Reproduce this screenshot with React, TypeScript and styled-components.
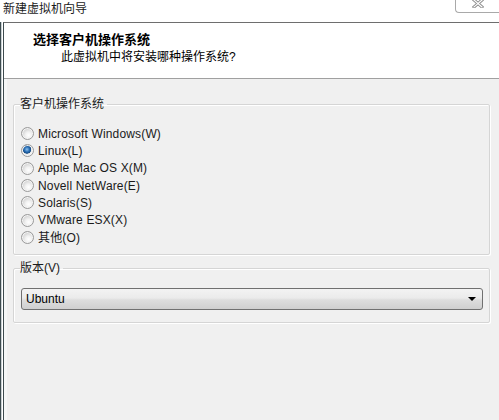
import React from "react";
import styled, { createGlobalStyle } from "styled-components";

const GlobalStyle = createGlobalStyle`
  html, body {
    margin: 0;
    padding: 0;
    background: #ffffff;
  }

  body {
    font-family: "Liberation Sans", "Noto Sans CJK SC", sans-serif;
    font-size: 12px;
    color: #000000;
  }
`;

const osOptions = [
  "Microsoft Windows(W)",
  "Linux(L)",
  "Apple Mac OS X(M)",
  "Novell NetWare(E)",
  "Solaris(S)",
  "VMware ESX(X)",
  "其他(O)",
];

const App = () => {
  // --- RENDER ---

  return (
    <>
      <GlobalStyle />
      <Window>
        <TitleBar>
          <Caption>新建虚拟机向导</Caption>
          <CloseButton>
            <svg width="12" height="9" viewBox="0 0 12 9">
              <path
                d="M2 1 L10 8 M10 1 L2 8"
                stroke="#8a8a8a"
                strokeWidth="3"
                strokeLinecap="square"
              />
              <path
                d="M2 1 L10 8 M10 1 L2 8"
                stroke="#ffffff"
                strokeWidth="1.2"
                strokeLinecap="square"
              />
            </svg>
          </CloseButton>
        </TitleBar>

        <Frame>
          <FrameEdge />
          <Client>
            <Header>
              <HeaderTitle>选择客户机操作系统</HeaderTitle>
              <HeaderSubtitle>此虚拟机中将安装哪种操作系统?</HeaderSubtitle>
            </Header>

            <Body>
              <GroupBox>
                <Legend>客户机操作系统</Legend>
                <RadioList>
                  {osOptions.map((label) => (
                    <RadioRow key={label}>
                      <Radio $checked={label === "Linux(L)"} />
                      <RadioLabel>{label}</RadioLabel>
                    </RadioRow>
                  ))}
                </RadioList>
              </GroupBox>

              <GroupBox $compact>
                <Legend>版本(V)</Legend>
                <Combo>
                  <ComboText>Ubuntu</ComboText>
                  <ComboArrow />
                </Combo>
              </GroupBox>
            </Body>
          </Client>
        </Frame>
      </Window>
    </>
  );
};

export default App;

const Window = styled.div`
  width: 499px;
  height: 420px;
  display: flex;
  flex-direction: column;
  overflow: hidden;
  background: #ffffff;
`;

const TitleBar = styled.div`
  height: 22px;
  display: flex;
  justify-content: space-between;
  align-items: flex-start;
  flex-shrink: 0;
`;

const Caption = styled.div`
  padding: 2px 0 0 3px;
  font-size: 12px;
  line-height: 15px;
  color: #1a1a1a;
`;

const CloseButton = styled.div`
  width: 43px;
  height: 12px;
  display: flex;
  align-items: flex-start;
  justify-content: center;
  border: 1px solid #a9a9a9;
  border-top: none;
  border-right: none;
  border-bottom-left-radius: 4px;
  background: #ffffff;

  svg {
    margin-top: -1px;
  }
`;

const Frame = styled.div`
  flex: 1;
  display: flex;
`;

const FrameEdge = styled.div`
  width: 1px;
  margin-right: 1px;
  border-left: 1px solid #3d4b4f;
  background: #c9d2d4;
`;

const Client = styled.div`
  flex: 1;
  display: flex;
  flex-direction: column;
  border-left: 1px solid #3d4b4f;
  border-top: 1px solid #6e6e6e;
  background: #f0f0f0;
`;

const Header = styled.div`
  height: 56px;
  padding: 8px 0 0 29px;
  box-sizing: border-box;
  background: #ffffff;
  border-bottom: 1px solid #a0a0a0;
`;

const HeaderTitle = styled.div`
  font-size: 13px;
  line-height: 17px;
  font-weight: bold;
`;

const HeaderSubtitle = styled.div`
  margin: 1px 0 0 28px;
  font-size: 12px;
  line-height: 16px;
`;

const Body = styled.div`
  flex: 1;
  padding: 18px 9px 0 9px;
  display: flex;
  flex-direction: column;
  gap: 6px;
  box-shadow: inset 3px 0 0 #f5f7f7;
`;

const GroupBox = styled.fieldset<{ $compact?: boolean }>`
  margin: 0;
  padding: ${({ $compact }) => ($compact ? "4px 6px 12px 7px" : "14px 6px 8px 7px")};
  border: 1px solid #d5d5d5;
  border-radius: 2px;
  box-shadow: inset 1px 1px 0 #ffffff, 1px 1px 0 #ffffff;
  min-width: 0;
`;

const Legend = styled.legend`
  padding: 0 3px 0 0;
  margin-left: -1px;
  font-size: 12px;
  line-height: 14px;
  color: #1a1a1a;
`;

const RadioList = styled.div`
  display: flex;
  flex-direction: column;
`;

const RadioRow = styled.div`
  height: 17.33px;
  display: flex;
  align-items: center;
  gap: 4px;
`;

const Radio = styled.span<{ $checked?: boolean }>`
  width: 11px;
  height: 11px;
  border-radius: 50%;
  border: 1px solid #9a9a9a;
  background: ${({ $checked }) =>
    $checked
      ? "radial-gradient(circle at 45% 40%, #8fc2ee 0, #2a6fb5 2.5px, #174d86 4px, #e6e6e6 4.5px, #f6f6f6 6px)"
      : "radial-gradient(circle at 60% 65%, #ffffff 0, #f2f2f2 3px, #d8d8d8 6px)"};
  box-shadow: inset 0 0 0 1px #f4f4f4;
  flex-shrink: 0;
`;

const RadioLabel = styled.span`
  font-size: 12px;
  line-height: 14px;
  letter-spacing: 0.15px;
  color: #1a1a1a;
`;

const Combo = styled.div`
  height: 20px;
  margin-top: 9px;
  display: flex;
  align-items: center;
  justify-content: space-between;
  padding: 0 6px 0 4px;
  border: 1px solid #707070;
  border-radius: 3px;
  background: linear-gradient(#f3f3f3 0%, #ebebeb 45%, #dddddd 55%, #cfcfcf 100%);
`;

const ComboText = styled.span`
  font-size: 12px;
  line-height: 14px;
  color: #000000;
`;

const ComboArrow = styled.span`
  width: 0;
  height: 0;
  border-left: 4px solid transparent;
  border-right: 4px solid transparent;
  border-top: 4px solid #000000;
`;
